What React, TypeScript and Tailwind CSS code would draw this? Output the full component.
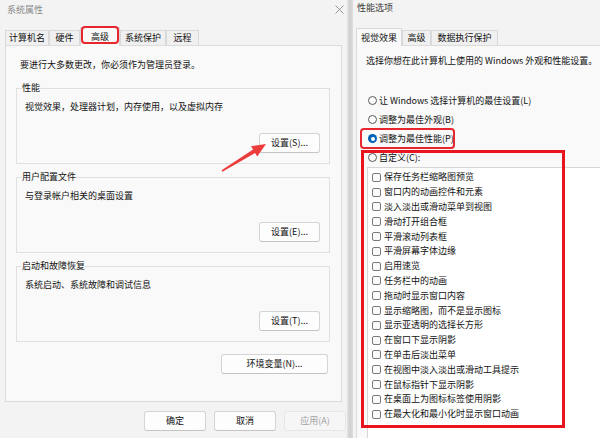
import type { ReactNode } from 'react'

const font = { fontFamily: '"Noto Sans CJK SC", "Liberation Sans", sans-serif' }

const effects = [
  '保存任务栏缩略图预览',
  '窗口内的动画控件和元素',
  '淡入淡出或滑动菜单到视图',
  '滑动打开组合框',
  '平滑滚动列表框',
  '平滑屏幕字体边缘',
  '启用速览',
  '任务栏中的动画',
  '拖动时显示窗口内容',
  '显示缩略图，而不是显示图标',
  '显示亚透明的选择长方形',
  '在窗口下显示阴影',
  '在单击后淡出菜单',
  '在视图中淡入淡出或滑动工具提示',
  '在鼠标指针下显示阴影',
  '在桌面上为图标标签使用阴影',
  '在最大化和最小化时显示窗口动画',
]

function Button({ children, className = '', disabled = false }: { children: ReactNode; className?: string; disabled?: boolean }) {
  return (
    <div
      className={`flex h-[20px] items-center justify-center rounded-[3px] border ${
        disabled
          ? 'border-[#e6e6e6] bg-[#f6f6f6] text-[#a3a3a3]'
          : 'border-[#d4d4d4] border-b-[#c4c4c4] bg-[#fdfdfd] text-[#111]'
      } ${className}`}
    >
      {children}
    </div>
  )
}

function Group({ title, text, button }: { title: string; text: string; button: string }) {
  return (
    <fieldset className="ml-[10px] w-[314px] border border-[#e0e0e0] pb-[10px] pl-[5px] pr-[9px]">
      <legend className="px-0 leading-[12px] text-[#111]">{title}</legend>
      <div className="ml-[3px] mt-[7px] leading-[12px] text-[#111]">{text}</div>
      <div className="mt-[20px] flex justify-end">
        <Button className="w-[61px]">{button}</Button>
      </div>
    </fieldset>
  )
}

function Radio({ label, checked = false }: { label: string; checked?: boolean }) {
  return (
    <div className="flex h-[19px] items-center pl-[11px]">
      {checked ? (
        <span className="flex h-[9px] w-[9px] items-center justify-center rounded-full bg-[#0063b8]">
          <span className="h-[4px] w-[4px] rounded-full bg-white" />
        </span>
      ) : (
        <span className="h-[9px] w-[9px] rounded-full border border-[#5a5a5a] bg-[#fbfbfb]" />
      )}
      <span className="ml-[2px] leading-[12px] text-[#111]">{label}</span>
    </div>
  )
}

function Tab({ label, width }: { label: string; width: string }) {
  return (
    <div
      className={`flex h-[15px] items-center justify-center border-x border-t border-[#d9d9d9] bg-[#f0f0f0] leading-[12px] text-[#111] ${width}`}
    >
      {label}
    </div>
  )
}

export default function App() {
  return (
    <div className="relative flex h-[438px] w-[600px] overflow-hidden bg-[#f3f3f3] text-[9px]" style={font}>
      {/* 系统属性 */}
      <div className="flex h-[438px] w-[347px] shrink-0 flex-col bg-[#f3f3f3]">
        <div className="flex h-[27px] shrink-0 items-start justify-between pl-[7px] pr-[3px] pt-[4px]">
          <span className="leading-[12px] text-[#8a8a8a]">系统属性</span>
          <svg width="9" height="9" viewBox="0 0 9 9" className="mt-[1px]">
            <path d="M0.5 0.5L8.5 8.5M8.5 0.5L0.5 8.5" stroke="#8a8a8a" strokeWidth="0.9" />
          </svg>
        </div>
        <div className="flex h-[18px] shrink-0 items-end px-[5px]">
          <Tab label="计算机名" width="w-[44px]" />
          <Tab label="硬件" width="w-[31px]" />
          <div className="relative z-10 -mb-px flex h-[19px] w-[40px] items-start justify-center border-x border-t border-[#d9d9d9] bg-[#f9f9f9] pt-[3px] leading-[12px] text-[#111]">
            高级
            <div className="absolute left-[0px] top-[-2px] h-[18px] w-[38px] rounded-[4px] border-2 border-[#e8262d]" />
          </div>
          <Tab label="系统保护" width="w-[46px]" />
          <Tab label="远程" width="w-[33px]" />
        </div>
        <div className="mx-[5px] h-[357px] shrink-0 border border-[#dcdcdc] bg-[#f9f9f9]">
          <div className="pl-[14px] pt-[13px] leading-[12px] text-[#111]">要进行大多数更改，你必须作为管理员登录。</div>
          <div className="mt-[11px]">
            <Group title="性能" text="视觉效果，处理器计划，内存使用，以及虚拟内存" button="设置(S)..." />
          </div>
          <div className="mt-[7px]">
            <Group title="用户配置文件" text="与登录帐户相关的桌面设置" button="设置(E)..." />
          </div>
          <div className="mt-[7px]">
            <Group title="启动和故障恢复" text="系统启动、系统故障和调试信息" button="设置(T)..." />
          </div>
          <div className="ml-[215px] mt-[12px]">
            <Button className="w-[107px]">环境变量(N)...</Button>
          </div>
        </div>
        <div className="mt-[9px] flex justify-end gap-[8px] pr-[1px]">
          <Button className="w-[62px]">确定</Button>
          <Button className="w-[62px]">取消</Button>
          <Button className="w-[62px]" disabled>
            应用(A)
          </Button>
        </div>
      </div>

      {/* shadow between windows */}
      <div className="h-[438px] w-[6px] shrink-0 bg-gradient-to-r from-[#e4e4e4] via-[#cfcfcf] to-[#dedede]" />

      {/* 性能选项 */}
      <div className="flex h-[438px] flex-1 flex-col overflow-hidden bg-[#f3f3f3] pl-[3px]">
        <div className="h-[28px] shrink-0 pl-[1px] pt-[2px] leading-[12px] text-[#3a3a3a]">性能选项</div>
        <div className="flex h-[17px] shrink-0 items-end">
          <div className="relative z-10 -mb-px flex h-[18px] w-[46px] items-start justify-center border-x border-t border-[#d9d9d9] bg-[#f9f9f9] pt-[3px] leading-[12px] text-[#111]">
            视觉效果
          </div>
          <Tab label="高级" width="w-[29px]" />
          <Tab label="数据执行保护" width="w-[67px]" />
        </div>
        <div className="w-[262px] flex-1 border border-[#dcdcdc] bg-[#f9f9f9]">
          <div className="pl-[9px] pt-[9px] leading-[12px] text-[#111]">选择你想在此计算机上使用的 Windows 外观和性能设置。</div>
          <div className="mt-[24px]">
            <Radio label="让 Windows 选择计算机的最佳设置(L)" />
            <Radio label="调整为最佳外观(B)" />
            <Radio label="调整为最佳性能(P)" checked />
            <Radio label="自定义(C):" />
          </div>
          <div className="ml-[10px] h-[300px] border border-[#d6d6d6] bg-white pl-[4px] pt-[2px]">
            {effects.map((item) => (
              <div key={item} className="flex h-[14.8px] items-center">
                <span className="h-[9px] w-[9px] rounded-[2px] border border-[#7a7a7a] bg-[#fafafa]" />
                <span className="ml-[3px] leading-[12px] text-[#111]">{item}</span>
              </div>
            ))}
          </div>
        </div>
      </div>

      {/* annotations */}
      <div className="pointer-events-none absolute left-[360px] top-[128px] h-[21px] w-[95px] rounded-[4px] border-2 border-[#e8262d]" />
      <div className="pointer-events-none absolute left-[361px] top-[150px] h-[278px] w-[204px] border-[3px] border-[#e8141f]" />
      <svg className="pointer-events-none absolute left-0 top-0" width="600" height="438" viewBox="0 0 600 438">
        <polygon
          points="221.6,170.3 253.1,149.6 251,146.2 266,144 257.2,156.4 255.1,153 222.4,171.7"
          fill="#ec3b3b"
        />
      </svg>
    </div>
  )
}
